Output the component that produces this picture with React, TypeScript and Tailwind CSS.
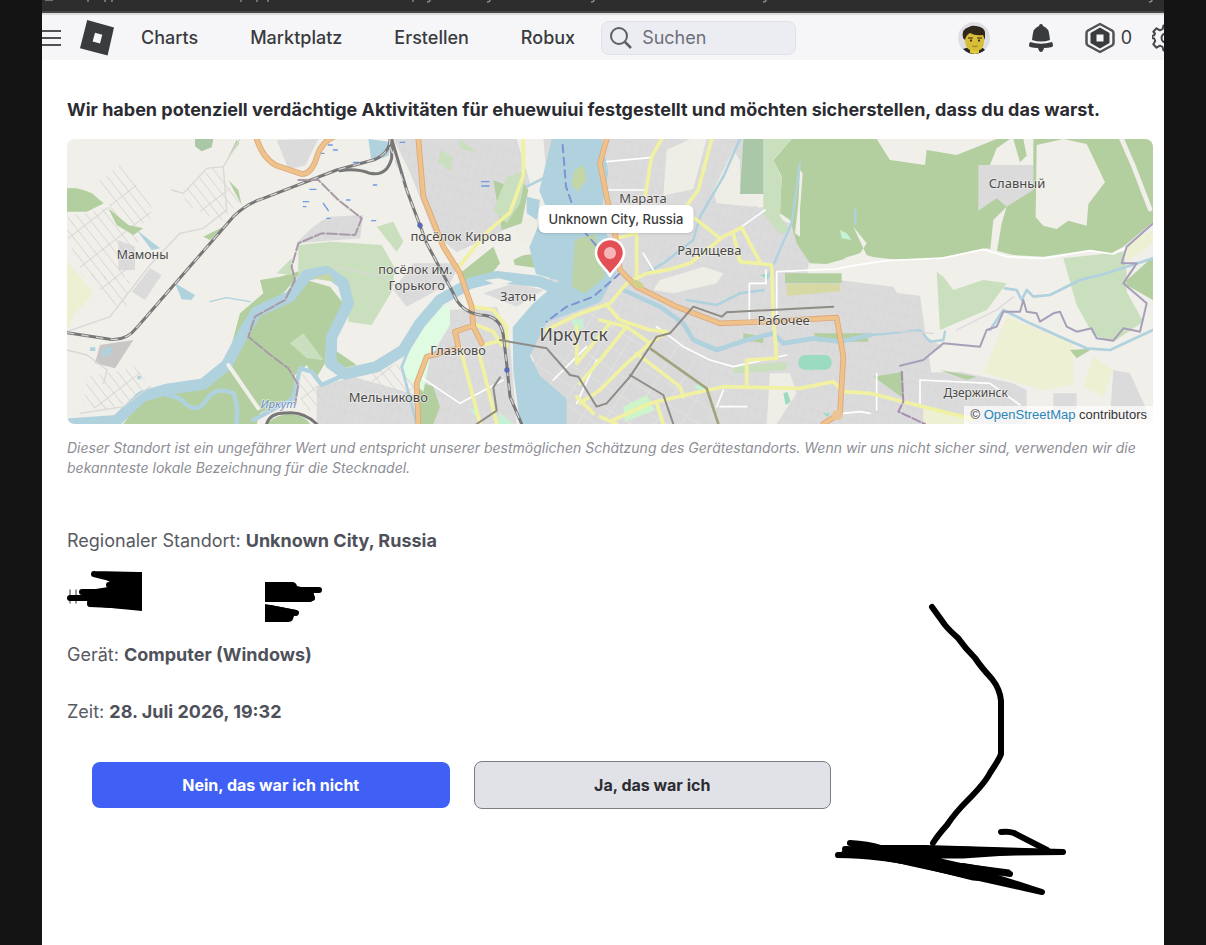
import type { ReactNode } from 'react';

const navLinks = ['Charts', 'Marktplatz', 'Erstellen', 'Robux'];

const placeLabels = [
  { x: 248, y: 388, size: 37, text: 'Мамоны' },
  { x: 1203, y: 332, size: 39, text: 'посёлок Кирова' },
  { x: 1066, y: 431, size: 38, text: 'посёлок им.' },
  { x: 1070, y: 480, size: 39, text: 'Горького' },
  { x: 1374, y: 512, size: 39, text: 'Затон' },
  { x: 1194, y: 676, size: 38, text: 'Глазково' },
  { x: 985, y: 817, size: 39, text: 'Мельниково' },
  { x: 1541, y: 632, size: 53, text: 'Иркутск' },
  { x: 1749, y: 219, size: 39, text: 'Марата' },
  { x: 1948, y: 376, size: 39, text: 'Радищева' },
  { x: 2171, y: 584, size: 39, text: 'Рабочее' },
  { x: 2871, y: 174, size: 39, text: 'Славный' },
  { x: 2747, y: 800, size: 36, text: 'Дзержинск' },
];

function Logo() {
  return (
    <svg viewBox="0 0 34 36" className="h-9 w-[34px]" aria-hidden="true">
      <path fill="#393b3d" fillRule="evenodd" d="M7.2 0 34 7.6 27.6 35.5 0 28.3ZM15 12.8 12.6 21.5 20 23.4 22.3 14.8Z" />
    </svg>
  );
}

function Avatar() {
  return (
    <svg viewBox="0 0 32 32" className="h-8 w-8" aria-hidden="true">
      <circle cx="16" cy="16" r="16" fill="#dedfe3" />
      <path d="M5 27q5-2 8-1h8q4-1 6 2-5 4-11 4T5 27z" fill="#25272a" />
      <path d="M12 24h9v7l-4 1-5-1z" fill="#e2ca3b" />
      <path d="M7 11h19v9q0 9-9 9T7 20z" fill="#d8be38" />
      <path d="M5 16Q3 7 11 5q3-2 7-1 8 1 9 6v8l-2-5q-8 1-13-2-4 2-5 7z" fill="#30261a" />
      <path d="M10 16h5M19 16h5" stroke="#6b5620" strokeWidth="1.500" />
      <path d="M12 18.500h2M20 18.500h2" stroke="#3b3015" strokeWidth="2" />
      <path d="M14 24q3 1 6 0" fill="none" stroke="#a38a28" strokeWidth="1.300" />
    </svg>
  );
}

function BellIcon() {
  return (
    <svg viewBox="0 0 24 28" className="h-7 w-6" fill="#393b3d" aria-hidden="true">
      <path d="M12 0q2 0 2 2 6 2 6.500 10l.5 4q-9 3-18 0l.5-4Q4 4 10 2q0-2 2-2z" />
      <path d="M1 18q11 3.500 22 0 2 4 0 5-4 1-8 1-1 4-3 4t-3-4q-4 0-8-1-2-1 0-5z" />
    </svg>
  );
}

function RobuxIcon() {
  return (
    <svg viewBox="0 0 30 32" className="h-8 w-[30px]" aria-hidden="true">
      <path d="M15 2 27 8.500q1.500 1 1.500 2.500v10q0 1.500-1.500 2.500L15 30 3 23.500Q1.500 22.500 1.500 21V11q0-1.500 1.500-2.500z" fill="none" stroke="#505356" strokeWidth="2.500" strokeLinejoin="round" />
      <path fill="#393b3d" fillRule="evenodd" d="M15 5.500 24.500 11v10L15 26.500 5.500 21V11zM11.500 12.500v7h7v-7z" />
    </svg>
  );
}

function GearIcon() {
  return (
    <svg viewBox="0 0 28 28" className="h-7 w-7" fill="none" stroke="#45484a" strokeWidth="2" strokeLinejoin="round" aria-hidden="true">
      <path d="M11.500 1.500h5l1 3.700 2.600 1.100 3.400-2 3.200 3.400-1.900 3.300 1 2.500 0 1-1 2.500 1.900 3.300-3.200 3.400-3.400-2-2.600 1.100-1 3.700h-5l-1-3.700-2.600-1.100-3.400 2-3.200-3.400 1.900-3.300-1-2.500-2.200-.5v-2l2.200-.8.800-1.700L1.300 7.700l3.200-3.400 3.400 2 2.600-1.100z" />
      <circle cx="14" cy="14" r="4.500" />
    </svg>
  );
}

function MapDrawing() {
  return (
    <svg
      viewBox="21 27 3258 855"
      preserveAspectRatio="xMidYMid slice"
      className="block h-full w-full"
      fill="none"
      strokeLinecap="round"
      strokeLinejoin="round"
      role="img"
      aria-label="Karte von Irkutsk"
    >
      <defs>
        <pattern id="blocks" width="46" height="38" patternUnits="userSpaceOnUse" patternTransform="rotate(14)">
          <rect width="46" height="38" fill="#dcdbdc" />
          <path d="M0 0h46M0 0v38M22 0v18" stroke="#d2d0d3" strokeWidth="2" />
        </pattern>
        <pattern id="plots" width="24" height="90" patternUnits="userSpaceOnUse" patternTransform="rotate(-38)">
          <path d="M0 0v90M0 0h24" stroke="#d3d1d1" strokeWidth="4" />
        </pattern>
        <pattern id="streets" width="66" height="54" patternUnits="userSpaceOnUse" patternTransform="rotate(32)">
          <rect width="66" height="54" fill="#dad9da" />
          <path d="M0 0h66M0 0v54" stroke="#e8e7e7" strokeWidth="3" />
        </pattern>
      </defs>

      <rect x="21" y="27" width="3258" height="855" fill="#f0efe9" />

      {/* Built-up land */}
      <g fill="url(#blocks)">
        <path d="M1000 27h370l40 130-50 130-170 80-70-60-70-180z" />
        <path d="M1450 27h600l30 60-50 110 150 80 90 30-30 120 90 40 250 30 50 340H1390l60-280 30-200z" />
        <path d="M1620 340 1800 300 2110 230 2170 430 2500 470 2600 640 2620 882H1500l-30-250z" />
        <path d="M1170 540 1310 530 1350 640 1370 882H1080l-10-160z" />
        <path d="M770 770 880 740 1090 800v82H770z" />
        <path d="M710 340q50-60 100-80l100-5-10 70-190 15z" />
        <path d="M2410 640 2600 620 2650 650 2540 710 2400 730z" />
        <path d="M2530 730 2700 725 2860 760 2900 780v102H2530z" />
        <path d="M1000 480 1060 400 1200 400 1170 460 1040 530z" />
      </g>
      <g fill="#dcdbdc">
        <path d="m650 30 125-3-40 80-50 10z" />
        <path d="m270 415 35 20-50 75-40-25zM175 330l50 20v70h-50z" />
        <path d="m1270 490 90-30 90 20-80 50z" />
        <path d="M2980 790h70v50h-70zM3160 720l50 10 60 130h-120zM2430 497h28v32h-28z" />
      </g>
      <path d="m120 645 100-15-55 85-60-15z" fill="#c9c7c6" />
      <g fill="#eeede6">
        <path d="m1820 60 70-33h50l-40 150-90 20zM1960 180l60-120 20 30v100l60 10-20 30-110-10z" />
        <path d="m1800 450 130-40 60 20-20 30-130 30-60-10zM1360 280l60-20 30 60-60 30zM2130 730h60l20 60-60 92h-30z" />
      </g>
      <g fill="url(#streets)">
        <path d="M1400 650 1620 530 1850 640 1960 780 1930 882H1500l-50-140z" />
      </g>
      <g fill="url(#plots)">
        <path d="m110 160 70-55 95 120-5 50-80 20zM21 260l130-30 90 90-50 130-120-10-50-120z" />
        <path d="m370 190 90-85 80 110-60 60-100-50zM80 430l130 20-10 80-40-5zM80 740l150-30 40 70-110 60-90-10z" />
        <path d="m700 750 40-30 60 80-60 50z" />
        <path d="m920 730 130-40 20 130-80 20z" />
      </g>

      {/* Farmland */}
      <g fill="#eef0d4">
        <path d="m21 390 80 100-55 60-25 50z" />
        <path d="M2840 560 3040 640 3040 765 2950 780 2770 730z" />
        <path d="m3100 680 60 40-30 80-60-30zM3200 340l79-40v40l-79 55z" />
        <path d="m2590 830 120 30 20 22h-140z" />
      </g>

      {/* Forest and parks */}
      <g fill="#b3cfa0">
        <path d="M21 175q30-5 75 15l35 30-50 25H21z" />
        <path d="m145 235 60 50 45 10-30 20-50-30zM430 320l60-30-40 40zM500 90l30-60 8 10zM505 150l30 30 10 45z" />
        <path d="M810 470 850 520 800 620 795 700 765 750 740 705 705 735 700 800 600 850 590 882H190l60-82 90-10 100-30 65-55 35-90 50-80 100-40 50-45z" />
        <path d="m660 440 70-20-60 70-90 50-30 80-50 80 40-150 70-60-10-40z" />
        <path d="M620 882q30-30 70-30t60 30z" />
        <path d="M810 650l80 55-60 15z" />
        <path d="m1200 430 100-80 20 50-40 50-80 10zM1300 150l50 20 30-30 25 40-20 100-60 20z" />
        <path d="M1360 390q60-40 110 15l50-50-25 50-60 10-70-10z" />
        <path d="m1060 750 60 20 20 60-20 52h-50z" />
        <path d="M2195 27 2140 90 2165 140 2160 250 2190 270 2210 340 2250 400 2300 402 2360 385 2400 370 2430 380 2520 390 2630 385 2780 355 2860 375 2950 380 3090 360 3150 372 3190 350 3279 275V27z" />
        <path d="M2175 430h170v30h-170z" />
        <path d="m3190 460 89-80v130zM3030 660l70-5-50 30zM2440 740l90-15v80z" />
        <path d="m2640 720 110 20-30 10zM2050 610l60 10v20l-60-10zM2260 610h160l5 25h-150z" />
      </g>
      <g fill="#cadfbe">
        <path d="m715 345 100-10 150 10 40 70-10 70-60 100-70-10V460l-150-30zM650 430l45-45v50zM690 640l40-30 60 80-50-5z" />
        <path d="m950 290 50-15 30 60-20 30zM1140 60l40 20-10 45-35-30zM1200 27l50 40-50-10zM1300 240l40-100 60-20-20 100-40 60z" />
        <path d="M2110 27h85l-55 60 25 60-5 110 30 45-30 10-50-60z" />
        <path d="M2630 425 2650 440 2680 480 2770 450 2840 460 2780 540 2640 600z" />
        <path d="m3010 385 180-20 10 60 0 60 50 90-90 60-60-20-50-90-20-70z" />
        <path d="m2020 710 160-15v25l-160 10z" />
      </g>
      <path d="M2050 27h60v165h-70zM405 27h55l-5 25-30 12-20-15z" fill="#aac8a8" />
      {/* Clearings in the northern forest */}
      <g fill="#f0efe9">
        <path d="m2930 45 80-18 70 15 55 115-50 65-5 65-55-15-35 25-40-10-23-25z" />
        <path d="m2450 27 40 63 105 15 5-45 90 15 120-48zM2790 105l20-50 40-28h70v78z" />
        <path d="m2790 367 10-97 40-40-15 50-15 90zM2205 310l10-90 5-100 8 10-8 110 0 80z" />
        <path d="m2350 385 50-15 20-30-40-50 40 85 30 10z" />
      </g>
      <path d="M2860 27h30l10 50-20 20z" fill="#b3cfa0" />
      <path d="M2755 105h165v75l-80 50-30-25-55 37z" fill="#dcdbdc" />
      <path d="m1120 530 50-5v60l-60 100-20 100-65-55 30-120z" fill="#dffbe2" />
      <path d="m1690 830 70-35 25 45-90 35z" fill="#cdf5c9" />
      <rect x="2215" y="675" width="100" height="44" rx="20" fill="#9bdcc0" />
      <path d="M2180 462h160v22l-160 14z" fill="#d7d9a4" />
      <path d="m2170 790 12-5 10 30-15 10zM2285 850h25l-5 10zM2100 435l25-5v20z" fill="#9bdcc0" />
      <g fill="#c5f2d2">
        <path d="m1535 570 35-5v30l-25 5zM1230 840l25-10v35zM1320 850l40 32h-50zM1900 770l30-10v25zM2340 300l20 10 15 20-30-5z" />
      </g>

      {/* Water */}
      <g fill="#b0d1de">
        <path d="M1475 27h150l20 100-25 140 40 90 10 70-50 90-160 60-50 100 30 60 80 70v75h-140l-20-160-2-130 60-70 80-70-70-20-20-80 50-120-20-50z" />
        <path d="M345 460 405 495 395 510 365 508zM130 655l30-5-10 25-25 5zM90 652h16v11H90zM230 300l70 55-25 5zM232 738h10v10h-10z" />
        <path d="m925 27 70 10-10 40-50 20zM1400 200l40 10-10 60-30-20z" />
      </g>
      <g stroke="#b0d1de">
        <path d="M30 882 170 872 245 800 320 778 430 762 500 705 550 610 590 545 690 500 740 435 800 425 850 460 865 520 815 620 812 700 855 732 950 710 1030 660 1080 580 1140 510 1230 460 1310 440 1440 455 1520 490" strokeWidth="34" />
        <path d="M320 795q40 5 55 25 35 30 60-5 30-50 85-25 15 30 10 90M580 870 700 805 720 715 755 725 785 765 840 740" strokeWidth="13" />
        <path d="M1070 600 1025 710 1070 882M1400 170 1480 130" strokeWidth="8" />
        <path d="M2040 27 1990 140 1920 260 1900 330 1810 400 1740 440M1880 510 1970 525 2040 490 2110 480" strokeWidth="8" />
        <path d="M1690 480 1800 530 1870 580 1900 630 1970 660 2060 630 2140 610 2170 640 2260 625 2340 635 2430 615" strokeWidth="14" />
        <path d="m2220 100-25 180-40 90-30 70M2386 240v40M2430 615l60-5 90-10 30 35 40-5 5-25" strokeWidth="7" />
        <path d="M2835 475 2870 480 2885 510 2900 480 2920 500 2970 495 3060 450 3140 430 3279 385M2790 600 2830 540 2910 580 3000 620 3080 655 3150 660 3279 600" strokeWidth="8" />
        <path d="M450 515l50-12 70 12" strokeWidth="4" />
      </g>
      <path d="M1545 120 1570 105 1580 150 1550 185 1535 160zM755 445l50-15 20 25z" fill="#c4d5a6" />
      <path d="m1545 330 60-20 30 130-60 50-40-20z" fill="#bcd3a8" />
      <path d="m1275 450 40-5 45 10-45 12z" fill="#f0efe9" />
      <path d="M1508 45 1518 170 1560 290 1620 360M1680 430 1600 500 1520 530 1460 575" stroke="#7f93d4" strokeWidth="6" strokeDasharray="22 16" />
      <g stroke="#6d9ae3" strokeWidth="4">
        <path d="M730 215h16M750 178h18M780 70h12M805 45h12M790 220l15 22M800 265h10M730 230h8M1265 155h22M1265 168h22M820 60h12M880 97h16M940 165h10M935 272h12M860 210h10M1020 37h14" />
      </g>

      {/* Minor roads */}
      <path d="m505 705 90 130" stroke="#f0efe9" strokeWidth="12" />
      <path d="m3185 27 35 80 50 130" stroke="#f0efe9" strokeWidth="14" />
      <g stroke="#fff" strokeWidth="5">
        <path d="m1640 95 130-12M1640 180h120M1780 420l-30-50M1790 590l80 60 80 40 70 20 160-35M2068 575v-115h50v-40M2045 290l70-50M2150 570V425l180-8 50-10" />
        <path d="M1980 830h80M1970 830l20-50M2450 730v110M2580 820v-70l210 10 90 65M1080 740l120 80 130-70M1580 650l-100 100M1610 690l-60 130M2350 850l50-5 30 5" />
        <path d="m2380 407 100-15 170-8 120-26 70 22 110 5 140-23 70 10 40-20" />
      </g>
      <g stroke="#d9d7d7" strokeWidth="4">
        <path d="M21 605 150 560 270 405 360 310 430 295 500 240 490 110 540 27M490 110l-50 5-70 75-35-10M21 660l60 15 60 45-10 40M60 850l130-20 80-60" />
        <path d="M820 410l150 30 80 60M2430 580l30 20 160 10M2690 600l120-60 50-40" />
      </g>

      {/* Main roads */}
      <g stroke="#f1f1a2" strokeWidth="11">
        <path d="M1390 27v110l-40 110-70 60-80 100M1240 530l60 10 40 50 0 60M1200 650l60 230M1255 660l55 220M1270 645l60-15M1250 585l50 20 25 40" />
        <path d="M1805 27 1775 80 1755 200M1955 27 1915 180 1870 240M1730 320v130M1670 325l60-15" />
        <path d="m1905 265 75 60 65-33 55 105M2020 310l20 85 95 10 5 150 10 130-90 5v80" />
        <path d="M1460 600 1550 555 1650 520 1700 460 1760 430 1830 418 1890 400 1980 328" />
        <path d="M1640 525 1680 570 1770 600 1820 605 1770 640 1700 700 1620 780 1560 820M1620 570 1700 590 1770 640" />
        <path d="M1700 590 1620 690 1560 760M1650 580 1550 700M1550 590v110M1730 670l130 100 10 30M1600 850l-50-50M1620 860l50 22" />
        <path d="M1660 870 1770 820 1900 790 1990 770 2220 775 2320 755 2350 785 2430 790 2590 830 2740 868M1790 820l20 62" />
      </g>

      {/* Trunk roads */}
      <g stroke="#dba879" strokeWidth="17">
        <path d="M1640 27 1620 100 1640 200 1665 310 1680 420 1730 470 1850 530 1980 580 2120 575 2330 563 2350 680 2340 850 2290 882" />
        <path d="M1075 27 1090 200 1150 350 1200 430 1235 530 1240 590 1265 640M1230 590l-45 15 10 45M590 27q20 60 60 80l75 25q30 0 45-50 15-50 60-65" />
        <path d="M1195 655 1100 680 1070 760 1075 882" />
      </g>
      <g stroke="#efc28c" strokeWidth="12">
        <path d="M1640 27 1620 100 1640 200 1665 310 1680 420 1730 470 1850 530 1980 580 2120 575 2330 563 2350 680 2340 850 2290 882" />
        <path d="M1075 27 1090 200 1150 350 1200 430 1235 530 1240 590 1265 640M1230 590l-45 15 10 45M590 27q20 60 60 80l75 25q30 0 45-50 15-50 60-65" />
        <path d="M1195 655 1100 680 1070 760 1075 882" />
      </g>
      <ellipse cx="1732" cy="462" rx="20" ry="10" fill="#cfd08a" transform="rotate(25 1732 462)" />
      <circle cx="2332" cy="855" r="16" fill="#ecc596" />

      {/* Railways and borders */}
      <g stroke="#777" strokeWidth="9">
        <path d="M21 608 150 628q50 5 80-35L520 260q40-40 90-55L830 120 940 90q50-20 50-63" />
        <path d="M840 122q50-8 90 8 50 10 65-45V27L1040 180 1100 340 1180 490q20 55 80 65 60 0 70 60l10 85 10 100 35 82" />
        <path d="M620 882q10-35 60-33 50-5 90 33" />
      </g>
      <g stroke="#d4d4d4" strokeWidth="4" strokeDasharray="22 22" strokeLinecap="butt">
        <path d="M21 608 150 628q50 5 80-35L520 260q40-40 90-55L830 120 940 90q50-20 50-63" />
        <path d="M990 50 1040 180 1100 340 1180 490q20 55 80 65 60 0 70 60l10 85 10 100 35 82" />
      </g>
      <path d="M715 150h60l60 60 70 55-20 50-100-5-70 30-20 70 10 40-30 60-90 50-20 60 60 50 60 45 30 50-10 60" stroke="#a99aa8" strokeWidth="6" strokeDasharray="30 8" />
      <g stroke="#8f8c86" strokeWidth="6">
        <path d="M1320 630 1460 655 1530 735 1555 740 1610 830 1640 820 1710 740 1790 620 1830 610 1900 530 1985 560 2000 547 2320 530M1710 735l100 60 30 87M1250 882l60-40-10-70 20-30" />
        <path d="m1770 655 170 120 35 107" stroke="#a3a37d" strokeWidth="8" />
      </g>
      <path d="M2520 707 2590 690 2650 640 2760 650 2780 600 2810 590 2830 545 2880 545 2890 510 2900 545 2930 550 2940 575 2980 550 3000 545 3020 590 3050 605 3095 595 3110 625 3160 632 3190 595 3240 605 3260 520 3190 460 3230 400 3185 400 3200 350 3279 280" stroke="#a79fba" strokeWidth="6" />
      <path d="m2525 725 5 90-15 30 80 37" stroke="#a58fae" strokeWidth="6" strokeDasharray="26 8" />
      <circle cx="1080" cy="286" r="8" fill="#5a69b4" />
      <circle cx="1341" cy="720" r="8" fill="#5a69b4" />

      {/* Labels */}
      <g fill="#4a4a4a" stroke="#f4f3f0" strokeWidth="5" strokeOpacity="0.7" textAnchor="middle" paintOrder="stroke" fontFamily="Noto Sans, sans-serif">
        {placeLabels.map((label) => (
          <text key={label.text} x={label.x} y={label.y} fontSize={label.size}>
            {label.text}
          </text>
        ))}
        <text x="655" y="834" fontSize="34" fontStyle="italic" fill="#6f93c9">
          Иркут
        </text>
      </g>
    </svg>
  );
}

function MapPin() {
  return (
    <svg viewBox="0 0 32 40" className="h-10 w-8" aria-hidden="true">
      <path d="M16 38C13 31 2 25 2 15a14 14 0 0 1 28 0c0 10-11 16-14 23z" fill="#e25055" stroke="#fff" strokeWidth="2.500" strokeLinejoin="round" />
      <circle cx="16" cy="15" r="6" fill="#f6b6b9" />
    </svg>
  );
}

function LocationMap() {
  return (
    <div className="relative h-[285px] overflow-hidden rounded-lg">
      <MapDrawing />
      <div className="absolute top-[66px] left-1/2 ml-1.5 -translate-x-1/2 rounded-md bg-white px-2.5 py-1 text-[13px] leading-5 font-medium whitespace-nowrap text-[#3a3a3a] shadow-sm">
        Unknown City, Russia
      </div>
      <div className="absolute top-[99px] left-1/2 -translate-x-1/2">
        <MapPin />
      </div>
      <div className="absolute right-0 bottom-0 bg-white/70 px-1.5 font-['Liberation_Sans',sans-serif] text-[13px] leading-[18px] text-[#333]">
        © <a href="#osm" className="text-[#2a86b8]">OpenStreetMap</a> contributors
      </div>
    </div>
  );
}

function InfoRow({ label, children }: { label: string; children: ReactNode }) {
  return (
    <p className="text-lg leading-7 text-[#585a63]">
      {label} <strong className="font-bold text-[#4f515a]">{children}</strong>
    </p>
  );
}

function Scribbles() {
  return (
    <svg viewBox="0 0 260 56" className="-my-3.5 block h-14 w-[260px]" fill="none" stroke="#000" strokeWidth="6" strokeLinecap="round" strokeLinejoin="round" aria-hidden="true">
      <path d="M3 20v13M9 20v13" stroke="#777a85" strokeWidth="1.500" />
      <path fill="#000" stroke="none" d="M28 2h47v39L24 36l-4-4 2-12 26-4-8-6z" />
      <path d="M27 4l44 1M42 15h28M15 22h55M3 28h60M23 34l45 2M27 4l40 10" />
      <path fill="#000" stroke="none" d="M198 12h27q4 0 5 4l16 4 2 9-4 3h-46zM198 34l31 6-3 9q-1 3-5 3h-23z" />
      <path d="M228 20h24M220 28h25M203 38l26 5" />
    </svg>
  );
}

function ArrowDoodle() {
  return (
    <svg viewBox="0 0 236 294" className="absolute top-[602px] left-[793px] h-[294px] w-[236px]" fill="none" stroke="#000" strokeWidth="6" strokeLinecap="round" strokeLinejoin="round" aria-hidden="true">
      <path d="M97 5 110 23q4 5 13 13 7 10 17 20 6 9 17 21 8 10 9 22v53q-1 4-11 19-5 10-23 28-12 12-20 24-9 10-14 18" />
      <path d="M166 230q8-1 13 1l33 17" />
      <path d="M15 241q18 1 31 5h44l138 4-98 1-120-4" />
      <path d="M3 253q44 1 73 8l64 14 67 15-66-21" />
      <path fill="#000" strokeWidth="3" d="M8 250 48 245 128 246 215 249 128 255 92 255 128 263 174 269 176 272 150 272 170 279 138 277 82 263z" />
      <path d="m128 264 47 8" />
    </svg>
  );
}

function Header() {
  return (
    <header className="flex h-[47px] items-center overflow-hidden border-t-2 border-[#dddde0] bg-[#f6f6f9] text-[#393b3d]">
      <button aria-label="Menü" className="flex shrink-0 flex-col gap-[5px] py-2">
        <span className="h-0.5 w-[19px] bg-[#505355]" />
        <span className="h-0.5 w-[19px] bg-[#505355]" />
        <span className="h-0.5 w-[19px] bg-[#505355]" />
      </button>
      <a href="#home" aria-label="Roblox" className="ml-[19px] shrink-0">
        <Logo />
      </a>
      <nav className="ml-[27px] flex gap-[52px] text-lg leading-6 font-medium">
        {navLinks.map((link) => (
          <a key={link} href={`#${link.toLowerCase()}`}>
            {link}
          </a>
        ))}
      </nav>
      <label className="ml-[26px] flex h-[34px] w-[195px] shrink-0 items-center gap-2.5 rounded-lg border border-[#dfe1e6] bg-[#ecedf2] px-2">
        <svg viewBox="0 0 22 22" className="h-[22px] w-[22px] shrink-0" fill="none" stroke="#5d6063" strokeWidth="2" aria-hidden="true">
          <circle cx="9" cy="9" r="8" />
          <path d="m15 15 6 6" strokeWidth="2.500" />
        </svg>
        <input type="text" aria-label="Suchen" placeholder="Suchen" className="w-full min-w-0 bg-transparent text-lg leading-6 outline-none placeholder:text-[#6c6f78]" />
      </label>
      <div className="-mr-4 ml-auto flex shrink-0 items-center">
        <a href="#profile" aria-label="Profil">
          <Avatar />
        </a>
        <button aria-label="Benachrichtigungen" className="ml-[39px]">
          <BellIcon />
        </button>
        <button aria-label="Robux" className="ml-8 flex items-center gap-1.5 text-lg leading-6">
          <RobuxIcon />
          <span>0</span>
        </button>
        <button aria-label="Einstellungen" className="ml-5">
          <GearIcon />
        </button>
      </div>
    </header>
  );
}

export default function App() {
  return (
    <div className="min-h-screen bg-[#141414] px-[42px] font-['Inter',sans-serif]">
      <div className="relative min-h-screen bg-white">
        {/* Bottom edge of the browser's address bar */}
        <div className="h-[13px] overflow-hidden border-b-2 border-[#474747] bg-[#2d2d2d]">
          <svg viewBox="0 0 1122 11" className="h-[11px] w-[1122px]" fill="none" stroke="#8b8b8b" strokeWidth="1.500" aria-hidden="true">
            <path d="M3 0h8M46 0v2M63 0v2M70 0v2M199 0v2M215 0v2M226 0v2M371 0v2M388 0q0 2-3 2M448 0q0 2-3 2M552 0q0 2-3 2M724 0q0 2-3 2M1110 0q0 2-3 2" />
          </svg>
        </div>
        <Header />
        <main className="pt-9 pr-[11px] pb-12 pl-[25px]">
          <h1 className="text-lg leading-7 font-bold text-[#2b2c31]">
            Wir haben potenziell verdächtige Aktivitäten für ehuewuiui festgestellt und möchten sicherstellen, dass du das warst.
          </h1>
          <div className="mt-[15px]">
            <LocationMap />
          </div>
          <p className="mt-3.5 text-sm leading-5 text-[#8d8e95] italic">
            Dieser Standort ist ein ungefährer Wert und entspricht unserer bestmöglichen Schätzung des Gerätestandorts. Wenn wir uns nicht sicher sind, verwenden wir die bekannteste lokale Bezeichnung für die Stecknadel.
          </p>
          <div className="mt-[49px] flex flex-col gap-[29px]">
            <InfoRow label="Regionaler Standort:">Unknown City, Russia</InfoRow>
            <Scribbles />
            <InfoRow label="Gerät:">Computer (Windows)</InfoRow>
            <InfoRow label="Zeit:">28. Juli 2026, 19:32</InfoRow>
          </div>
          <div className="mt-[35px] grid max-w-[764px] grid-cols-2 items-center gap-6 pl-[25px] text-base leading-6 font-bold">
            <button className="h-[46px] rounded-lg bg-[#3f5ff5] text-white">Nein, das war ich nicht</button>
            <button className="h-12 rounded-lg border border-[#7c7e84] bg-[#e1e2e8] text-[#2b2c31]">Ja, das war ich</button>
          </div>
        </main>
        <ArrowDoodle />
      </div>
    </div>
  );
}
